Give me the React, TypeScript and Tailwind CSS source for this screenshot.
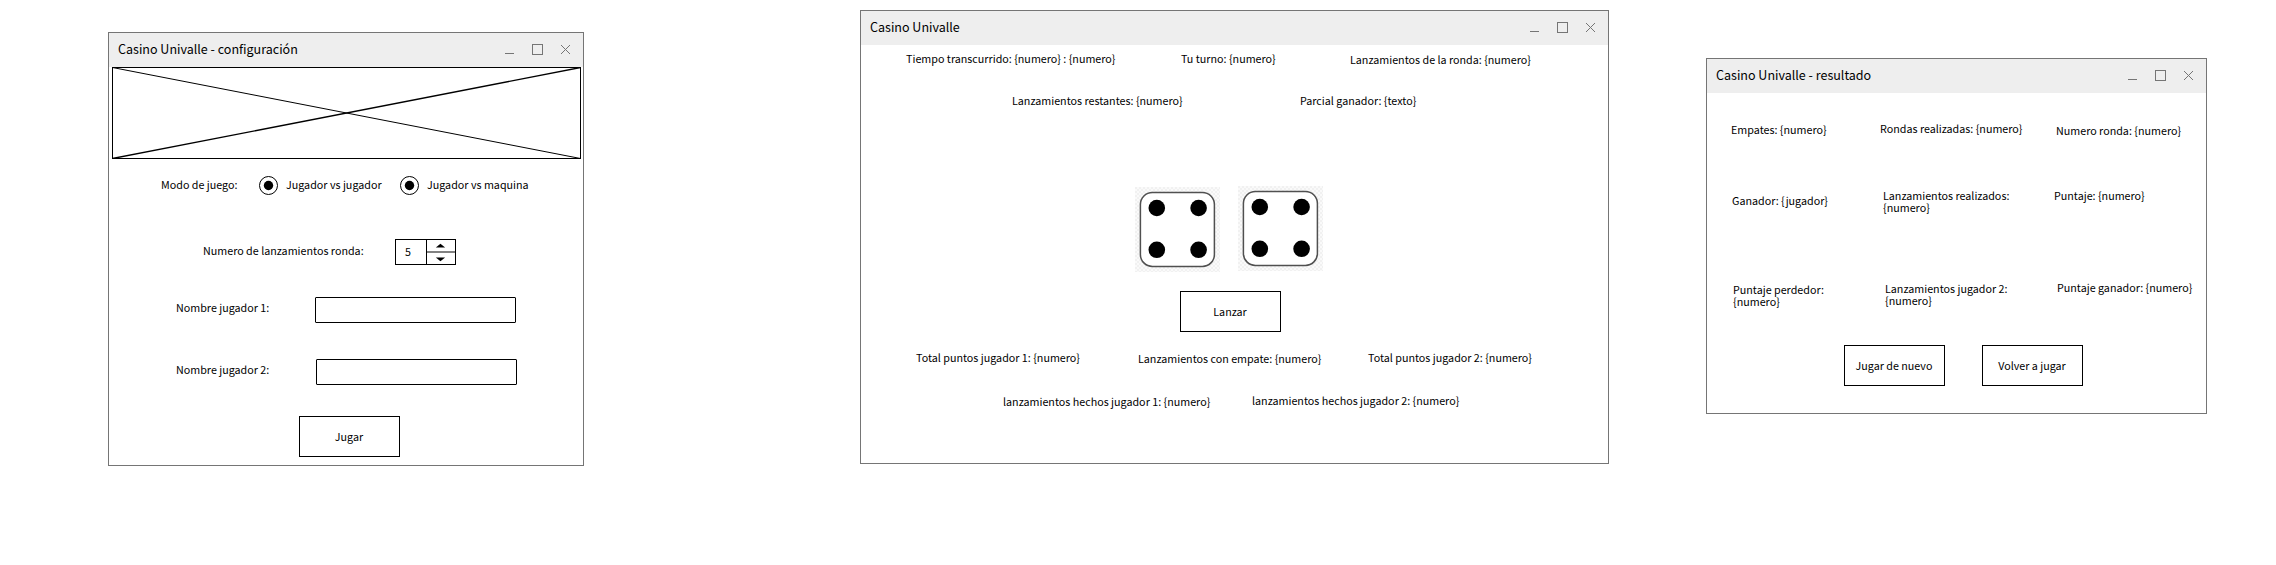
import type { ReactNode } from "react";

function Label({ className = "", children }: { className?: string; children: ReactNode }) {
  return <span className={`shrink-0 whitespace-nowrap pt-px ${className}`}>{children}</span>;
}

function WindowFrame({ title, className, children }: { title: string; className: string; children: ReactNode }) {
  return (
    <section className={`flex shrink-0 flex-col border border-[#757575] bg-white ${className}`}>
      <header className="flex h-[34px] shrink-0 items-center justify-between bg-[#eeeeee] pb-px pl-[9px] pr-[12px]">
        <h1 className="pb-[2px] text-[12.53px] leading-[16px]">{title}</h1>
        <svg width="66" height="11" viewBox="0 0 66 11" fill="none" stroke="#757575" shapeRendering="crispEdges">
          <path d="M0 9.5h9" />
          <rect x="27.5" y="0.5" width="10" height="10" />
          <path d="M56 1l9 9M65 1l-9 9" />
        </svg>
      </header>
      {children}
    </section>
  );
}

function Button({ className = "", children }: { className?: string; children: ReactNode }) {
  return (
    <button className={`flex h-[41px] w-[101px] shrink-0 items-center justify-center whitespace-nowrap border border-black bg-white pr-px pt-px ${className}`}>
      {children}
    </button>
  );
}

function Radio({ className = "" }: { className?: string }) {
  return (
    <svg className={`shrink-0 ${className}`} width="20" height="20" viewBox="0 0 20 20">
      <circle cx="9.5" cy="9.5" r="9" fill="white" stroke="black" />
      <circle cx="9.5" cy="9.5" r="4.7" />
    </svg>
  );
}

function Die({ id, className = "" }: { id: string; className?: string }) {
  return (
    <svg className={`shrink-0 ${className}`} width="85" height="85" viewBox="0 0 85 85">
      <defs>
        <pattern id={id} width="4" height="4" patternUnits="userSpaceOnUse">
          <rect width="4" height="4" fill="#fafafa" />
          <path d="M0 0h2v2H0zM2 2h2v2H2z" fill="#f1f1f1" />
        </pattern>
      </defs>
      <rect width="85" height="85" fill={`url(#${id})`} />
      <rect x="5.4" y="5.4" width="74" height="74" rx="12" fill="white" stroke="#505050" strokeWidth="1.5" />
      <circle cx="21.8" cy="21" r="8.3" />
      <circle cx="63.6" cy="21" r="8.3" />
      <circle cx="21.8" cy="62.8" r="8.3" />
      <circle cx="63.6" cy="62.8" r="8.3" />
    </svg>
  );
}

function SetupWindow() {
  return (
    <WindowFrame title="Casino Univalle - configuración" className="mt-[32px] h-[434px] w-[476px]">
      <svg className="ml-[3px] shrink-0" width="469" height="92" viewBox="0 0 469 92" fill="none" stroke="black">
        <rect x="0.5" y="0.5" width="468" height="91" />
        <path d="M0.5 0.5l468 91" />
        <path d="M0.5 91.5l468-91" strokeWidth="1.4" />
      </svg>
      <div className="mt-[17px] flex h-[20px] items-center">
        <Label className="mb-[3px] ml-[52px] w-[98px]">Modo de juego:</Label>
        <Radio />
        <Label className="mb-[3px] ml-[7px] w-[114px]">Jugador vs jugador</Label>
        <Radio />
        <Label className="mb-[3px] ml-[7px]">Jugador vs maquina</Label>
      </div>
      <div className="mt-[43px] flex h-[26px]">
        <Label className="ml-[94px] mt-[5px] w-[192px]">Numero de lanzamientos ronda:</Label>
        <div className="flex h-[26px] w-[61px] border border-black">
          <span className="w-[31px] border-r border-black pl-[9px] pt-[6px]">5</span>
          <svg width="29" height="24" viewBox="0 0 29 24">
            <path d="M9 7.5l4.7-4 4.8 4z" />
            <rect y="11" width="29" height="2" fill="#808080" />
            <path d="M9 17.5h9.5l-4.8 4z" />
          </svg>
        </div>
      </div>
      <div className="mt-[32px] flex h-[26px]">
        <Label className="ml-[67px] mt-[4px] w-[139px]">Nombre jugador 1:</Label>
        <input aria-label="Nombre jugador 1" className="h-[26px] w-[201px] rounded-[1px] border border-black px-2" />
      </div>
      <div className="mt-[36px] flex h-[26px]">
        <Label className="ml-[67px] mt-[4px] w-[140px]">Nombre jugador 2:</Label>
        <input aria-label="Nombre jugador 2" className="h-[26px] w-[201px] rounded-[1px] border border-black px-2" />
      </div>
      <Button className="ml-[190px] mt-[31px]">Jugar</Button>
    </WindowFrame>
  );
}

function GameWindow() {
  return (
    <WindowFrame title="Casino Univalle" className="ml-[276px] mt-[10px] h-[454px] w-[749px]">
      <div className="flex h-[49px] pt-[7px]">
        <Label className="ml-[45px] w-[275px]">{"Tiempo transcurrido: {numero} : {numero}"}</Label>
        <Label className="w-[169px]">{"Tu turno: {numero}"}</Label>
        <Label className="mt-px">{"Lanzamientos de la ronda: {numero}"}</Label>
      </div>
      <div className="flex h-[92px]">
        <Label className="ml-[151px] w-[288px]">{"Lanzamientos restantes: {numero}"}</Label>
        <Label>{"Parcial ganador: {texto}"}</Label>
      </div>
      <div className="flex gap-[18px] pl-[274px]">
        <Die id="checker-left" className="mt-px" />
        <Die id="checker-right" />
      </div>
      <Button className="ml-[319px] mt-[19px]">Lanzar</Button>
      <div className="mt-[19px] flex h-[43px]">
        <Label className="ml-[55px] w-[222px]">{"Total puntos jugador 1: {numero}"}</Label>
        <Label className="mt-px w-[230px]">{"Lanzamientos con empate: {numero}"}</Label>
        <Label>{"Total puntos jugador 2: {numero}"}</Label>
      </div>
      <div className="flex">
        <Label className="ml-[142px] mt-px w-[249px]">{"lanzamientos hechos jugador 1: {numero}"}</Label>
        <Label>{"lanzamientos hechos jugador 2: {numero}"}</Label>
      </div>
    </WindowFrame>
  );
}

function ResultWindow() {
  return (
    <WindowFrame title="Casino Univalle - resultado" className="ml-[97px] mt-[58px] h-[356px] w-[501px]">
      <div className="flex h-[67px] pt-[29px]">
        <Label className="ml-[24px] mt-px w-[149px]">{"Empates: {numero}"}</Label>
        <Label className="w-[176px]">{"Rondas realizadas: {numero}"}</Label>
        <Label className="mt-[2px]">{"Numero ronda: {numero}"}</Label>
      </div>
      <div className="flex h-[92px] pt-[29px]">
        <Label className="ml-[25px] mt-[5px] w-[151px]">{"Ganador: {jugador}"}</Label>
        <Label className="w-[171px]">Lanzamientos realizados:<br />{"{numero}"}</Label>
        <Label>{"Puntaje: {numero}"}</Label>
      </div>
      <div className="flex h-[93px] pt-[29px]">
        <Label className="ml-[26px] mt-[2px] w-[152px]">Puntaje perdedor:<br />{"{numero}"}</Label>
        <Label className="mt-px w-[172px]">Lanzamientos jugador 2:<br />{"{numero}"}</Label>
        <Label>{"Puntaje ganador: {numero}"}</Label>
      </div>
      <div className="flex gap-[37px] pl-[137px]">
        <Button>Jugar de nuevo</Button>
        <Button>Volver a jugar</Button>
      </div>
    </WindowFrame>
  );
}

export default function App() {
  return (
    <main className="flex h-[565px] w-[2276px] items-start overflow-hidden bg-white pl-[108px] font-['Noto_Sans_CJK_SC','Noto_Sans',sans-serif] text-[10.74px] leading-[12px] text-black">
      <SetupWindow />
      <GameWindow />
      <ResultWindow />
    </main>
  );
}
